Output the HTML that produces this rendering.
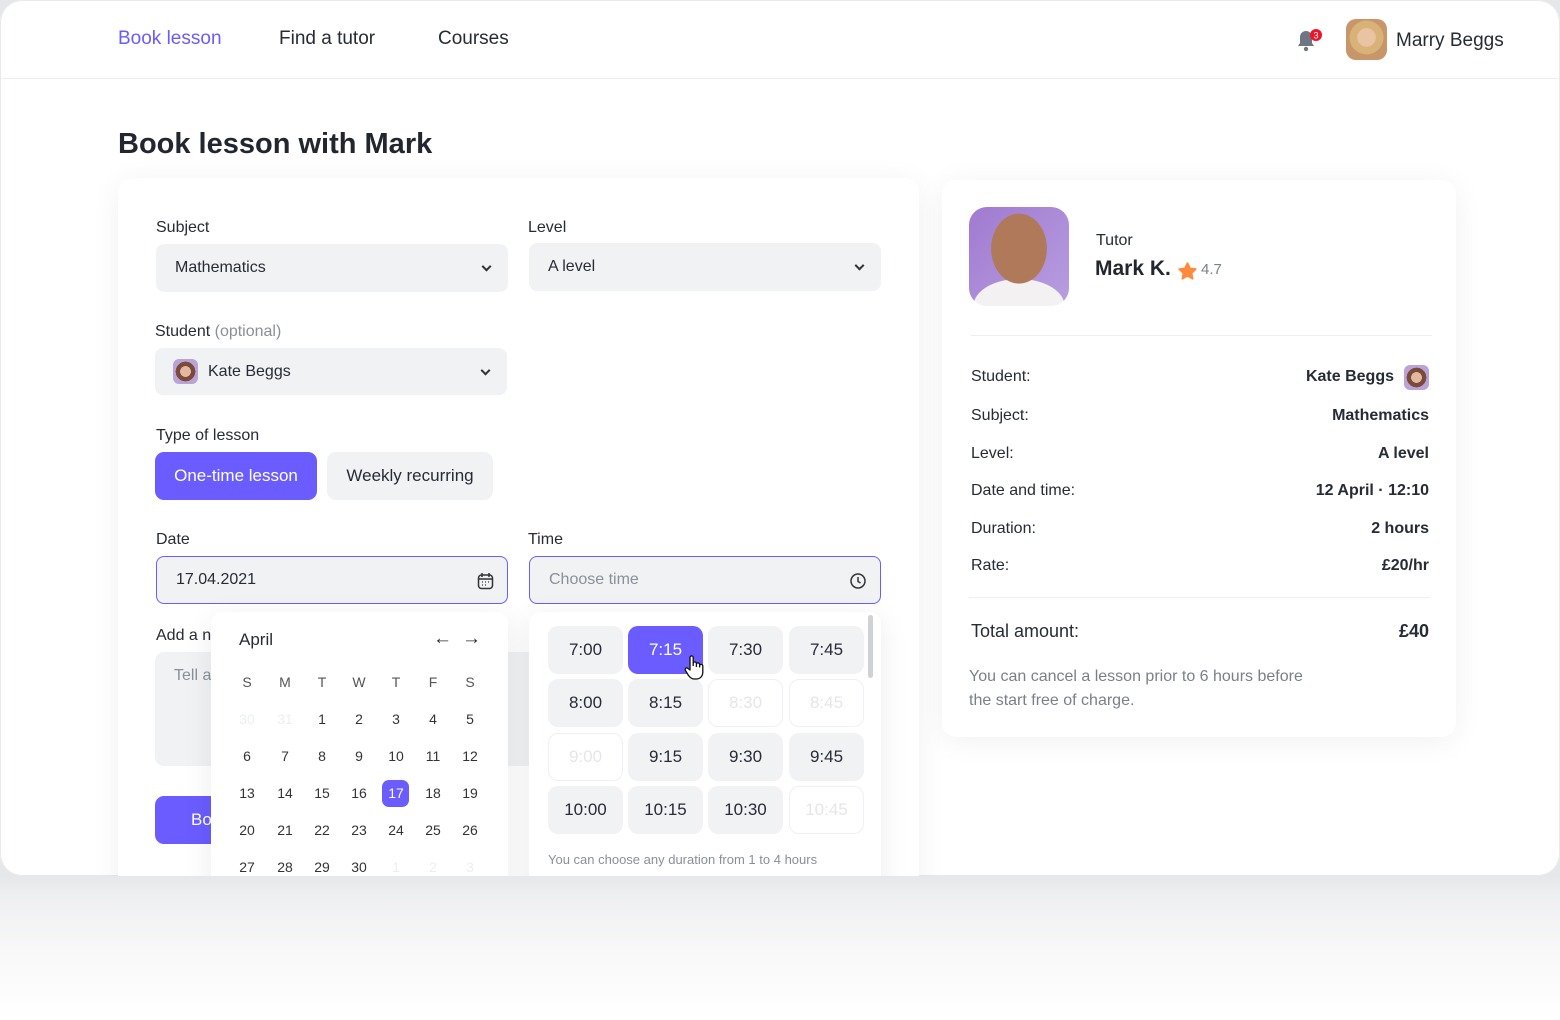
<!DOCTYPE html>
<html><head><meta charset="utf-8"><style>
*{box-sizing:border-box;margin:0;padding:0}
body{width:1560px;height:1020px;position:relative;overflow:hidden;font-family:"Liberation Sans",sans-serif;color:#272b35;background:linear-gradient(#e6e7e9 876px,#eeeff0 895px,#f8f8f9 950px,#fff 1020px)}
.a{position:absolute}
.win{left:0;top:0;width:1560px;height:876px;background:#fff;box-shadow:inset 0 0 0 1px #e8e9eb;border-radius:22px;overflow:hidden}
.nav{font-size:19px}
.lbl{font-size:16px;color:#272b35}
.inp{background:#f1f2f4;border-radius:8px;font-size:16px;color:#272b35;padding-left:19px;display:flex;align-items:center}
.chev{position:absolute;right:18px;top:50%;width:7px;height:7px;border-right:2px solid #333;border-bottom:2px solid #333;transform:translateY(-70%) rotate(45deg)}
.card{background:#fff;border-radius:14px;box-shadow:0 4px 30px rgba(0,0,0,.06)}
.pop{background:#fff;border-radius:12px;box-shadow:0 6px 30px rgba(0,0,0,.08)}
.cal{font-size:14px;color:#333;text-align:center;width:30px;margin-left:-15px}
.t{width:75px;height:48px;border-radius:10px;background:#f1f2f4;font-size:17px;display:flex;align-items:center;justify-content:center;color:#272b35}
.t.d{background:#fff;border:1px solid #f0f0f2;color:#e6e6ea}
.t.s{background:#6a5cff;color:#fff}
.row{left:971px;width:458px;font-size:16px;display:flex;justify-content:space-between;align-items:center}
.row b{font-weight:bold;color:#272b35}
</style></head><body>
<div class="a win">
<div class="a nav" style="left:118px;top:28px;color:#6a5cff">Book lesson</div>
<div class="a nav" style="left:279px;top:28px">Find a tutor</div>
<div class="a nav" style="left:438px;top:28px">Courses</div>
<svg class="a" style="left:1294px;top:26px" width="32" height="30" viewBox="0 0 32 30"><path d="M4 20 L6 17 V11 A6 6 0 0 1 18 11 V17 L20 20 Z" fill="#6f7683"/><circle cx="12" cy="23" r="2.2" fill="#6f7683"/><circle cx="22" cy="9" r="6" fill="#f0142a"/><text x="22" y="12.5" font-size="9" fill="#fff" text-anchor="middle" font-family="Liberation Sans">3</text></svg>
<div class="a" style="left:1346px;top:19px;width:41px;height:41px;border-radius:10px;background:radial-gradient(circle at 50% 45%,#e9c3a2 0 30%,#d9b277 31% 55%,#c9956a 56%)"></div>
<div class="a nav" style="left:1396px;top:30px">Marry Beggs</div>
<div class="a" style="left:0;top:78px;width:1560px;height:1px;background:#eeeff1"></div>
<div class="a" style="left:118px;top:128px;font-size:29px;font-weight:bold;color:#22262e">Book lesson with Mark</div>

<div class="a card" style="left:118px;top:178px;width:801px;height:760px"></div>
<div class="a lbl" style="left:156px;top:219px">Subject</div>
<div class="a inp" style="left:156px;top:244px;width:352px;height:48px">Mathematics<span class="chev"></span></div>
<div class="a lbl" style="left:528px;top:219px">Level</div>
<div class="a inp" style="left:529px;top:243px;width:352px;height:48px">A level<span class="chev"></span></div>
<div class="a lbl" style="left:155px;top:323px">Student <span style="color:#8a8f99">(optional)</span></div>
<div class="a inp" style="left:155px;top:348px;width:352px;height:47px;padding-left:18px"><span style="display:inline-block;width:25px;height:25px;border-radius:6px;background:radial-gradient(circle at 50% 50%,#e4b8a0 0 30%,#7a4a3a 31% 55%,#b9a4d8 56%);margin-right:10px"></span>Kate Beggs<span class="chev"></span></div>
<div class="a lbl" style="left:156px;top:427px">Type of lesson</div>
<div class="a" style="left:155px;top:452px;width:162px;height:48px;border-radius:9px;background:#6a5cff;color:#fff;font-size:17px;display:flex;align-items:center;justify-content:center">One-time lesson</div>
<div class="a" style="left:327px;top:452px;width:166px;height:48px;border-radius:9px;background:#f1f2f4;font-size:17px;display:flex;align-items:center;justify-content:center">Weekly recurring</div>
<div class="a lbl" style="left:156px;top:531px">Date</div>
<div class="a inp" style="left:156px;top:556px;width:352px;height:48px;border:1.5px solid #6a5cff">17.04.2021
<svg class="a" style="right:13px;top:15px" width="17" height="18" viewBox="0 0 17 18"><rect x="1.5" y="3" width="14" height="13.5" rx="3" fill="none" stroke="#333" stroke-width="1.5"/><path d="M1.5 7h14M5 1v4M12 1v4" stroke="#333" stroke-width="1.5"/><path d="M5 10h1M8 10h1M11 10h1M5 13h1M8 13h1" stroke="#333" stroke-width="1.3"/></svg></div>
<div class="a lbl" style="left:528px;top:531px">Time</div>
<div class="a inp" style="left:529px;top:556px;width:352px;height:48px;border:1.5px solid #6a5cff;color:#8a8f99">Choose time
<svg class="a" style="right:13px;top:15px" width="18" height="18" viewBox="0 0 18 18"><circle cx="9" cy="9" r="7" fill="none" stroke="#333" stroke-width="1.5"/><path d="M9 5v4.5l2.5 1.5" fill="none" stroke="#333" stroke-width="1.5"/></svg></div>
<div class="a lbl" style="left:156px;top:627px">Add a n</div>
<div class="a" style="left:155px;top:652px;width:726px;height:114px;background:#f1f2f4;border-radius:9px"></div>
<div class="a" style="left:174px;top:667px;font-size:16px;color:#8a8f99">Tell a</div>
<div class="a" style="left:155px;top:796px;width:162px;height:48px;border-radius:9px;background:#6a5cff;color:#fff;font-size:17px;padding:14px 0 0 36px">Book</div>

<div class="a pop" style="left:211px;top:612px;width:297px;height:300px"></div>
<div class="a" style="left:239px;top:630px;font-size:17px">April</div>
<div class="a" style="left:433px;top:628px;font-size:19px">&#8592;</div>
<div class="a" style="left:462px;top:628px;font-size:19px">&#8594;</div>
<div id="cal"></div>

<div class="a pop" style="left:529px;top:612px;width:352px;height:300px"></div>
<div class="a" style="left:868px;top:615px;width:5px;height:63px;border-radius:3px;background:#cfd1d6"></div>
<div id="tm"></div>
<div class="a" style="left:548px;top:852px;font-size:13px;color:#8a8f99">You can choose any duration from 1 to 4 hours</div>
<svg class="a" style="left:684px;top:655px" width="22" height="26" viewBox="0 0 22 26"><path d="M6 2.5a1.6 1.6 0 0 1 3.2 0V11 M9.2 8.5a1.6 1.6 0 0 1 3.2 0V12 M12.4 9.5a1.6 1.6 0 0 1 3.2 0V12.5 M15.6 11a1.6 1.6 0 0 1 3.2 0V17c0 4-2.5 7-6.5 7H10c-2.5 0-4-1.5-5.5-3.5L1.5 15.5a1.6 1.6 0 0 1 2.5-2L6 15V2.5" fill="#fff" stroke="#111" stroke-width="1.3" stroke-linejoin="round"/></svg>

<div class="a card" style="left:942px;top:180px;width:514px;height:557px"></div>
<div class="a" style="left:969px;top:207px;width:100px;height:99px;border-radius:18px;background:radial-gradient(ellipse 30% 38% at 50% 42%,#b07a5a 0 92%,transparent 94%),radial-gradient(ellipse 50% 30% at 50% 100%,#f3f1f2 0 90%,transparent 92%),linear-gradient(135deg,#a07ad0,#b89ee0)"></div>
<div class="a" style="left:1096px;top:232px;font-size:16px">Tutor</div>
<div class="a" style="left:1095px;top:257px;font-size:21px;font-weight:bold;color:#22262e">Mark K.</div>
<svg class="a" style="left:1177px;top:261px" width="21" height="21" viewBox="0 0 24 24"><path d="M12 2.5l2.9 6 6.6.8-4.9 4.5 1.3 6.5L12 17l-5.9 3.3 1.3-6.5L2.5 9.3l6.6-.8z" fill="#ff8a3d" stroke="#ff8a3d" stroke-width="2" stroke-linejoin="round"/></svg>
<div class="a" style="left:1201px;top:261px;font-size:15px;color:#7a7f89">4.7</div>
<div class="a" style="left:971px;top:335px;width:461px;height:1px;background:#eeeff1"></div>
<div class="a row" style="top:364px;height:26px"><span>Student:</span><b style="display:flex;align-items:center">Kate Beggs <span style="display:inline-block;width:25px;height:25px;border-radius:6px;margin-left:10px;background:radial-gradient(circle at 50% 50%,#e4b8a0 0 30%,#7a4a3a 31% 55%,#b9a4d8 56%)"></span></b></div>
<div class="a row" style="top:407px"><span>Subject:</span><b>Mathematics</b></div>
<div class="a row" style="top:445px"><span>Level:</span><b>A level</b></div>
<div class="a row" style="top:482px"><span>Date and time:</span><b>12 April · 12:10</b></div>
<div class="a row" style="top:520px"><span>Duration:</span><b>2 hours</b></div>
<div class="a row" style="top:557px"><span>Rate:</span><b>£20/hr</b></div>
<div class="a" style="left:969px;top:597px;width:461px;height:1px;background:#eeeff1"></div>
<div class="a row" style="top:621px;font-size:18px"><span>Total amount:</span><b>£40</b></div>
<div class="a" style="left:969px;top:665px;font-size:16px;color:#7a7f89;line-height:24px">You can cancel a lesson prior to 6 hours before<br>the start free of charge.</div>
</div>
<script>
var xs=[247,285,322,359,396,433,470],h="";
"SMTWTFS".split("").forEach(function(c,i){h+='<div class="a cal" style="left:'+xs[i]+'px;top:674px;color:#555">'+c+'</div>'});
var d=[[30,31,1,2,3,4,5],[6,7,8,9,10,11,12],[13,14,15,16,17,18,19],[20,21,22,23,24,25,26],[27,28,29,30,1,2,3]];
d.forEach(function(r,ri){r.forEach(function(v,i){var y=711+ri*37,dim=(ri==0&&i<2)||(ri==4&&i>3);
if(v==17&&ri==2)h+='<div class="a" style="left:382px;top:780px;width:27px;height:27px;border-radius:7px;background:#6a5cff"></div>';
h+='<div class="a cal" style="left:'+xs[i]+'px;top:'+y+'px;color:'+(dim?'#eceef0':(v==17&&ri==2?'#fff':'#333'))+'">'+v+'</div>'})});
document.getElementById('cal').outerHTML=h;
var tx=[548,628,708,789],ty=[626,679,733,786],t=[["7:00","7:15","7:30","7:45"],["8:00","8:15","8:30","8:45"],["9:00","9:15","9:30","9:45"],["10:00","10:15","10:30","10:45"]],dis={"8:30":1,"8:45":1,"9:00":1,"10:45":1},g="";
t.forEach(function(r,ri){r.forEach(function(v,i){g+='<div class="a t'+(dis[v]?' d':'')+(v=="7:15"?' s':'')+'" style="left:'+tx[i]+'px;top:'+ty[ri]+'px">'+v+'</div>'})});
document.getElementById('tm').outerHTML=g;
</script>
</body></html>
